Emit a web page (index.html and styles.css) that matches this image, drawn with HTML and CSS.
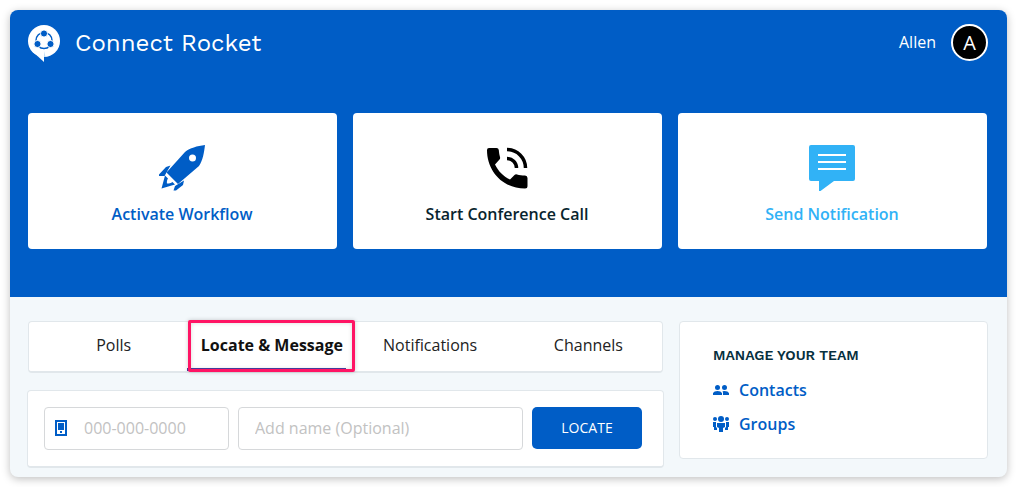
FILE: index.html
```html
<!DOCTYPE html>
<html lang="en">
<head>
<meta charset="utf-8">
<meta name="viewport" content="width=device-width, initial-scale=1">
<title>Connect Rocket</title>
<link rel="stylesheet" href="styles.css">
</head>
<body>
<div class="app">
  <header class="hero">
    <div class="topbar">
      <div class="brand">
        <svg class="brand-logo" width="32" height="38" viewBox="0 0 32 38" aria-hidden="true">
          <circle cx="16" cy="17" r="16" fill="#fff"/>
          <path d="M4 27 16 38V27z" fill="#fff"/>
          <path d="M16 27 17.500 33H16z" fill="#bcdcf7"/>
          <circle cx="16" cy="16.500" r="8" fill="none" stroke="#005dc6" stroke-width="1.500"/>
          <g fill="#005dc6" stroke="#fff"><circle cx="16" cy="9.500" r="3.600"/><circle cx="9.500" cy="20" r="3.600"/><circle cx="22.500" cy="20" r="3.600"/></g>
        </svg>
        <span class="brand-name">Connect Rocket</span>
      </div>
      <div class="user">
        <span class="user-name">Allen</span>
        <span class="avatar">A</span>
      </div>
    </div>
    <div class="actions">
      <button class="action action-workflow" type="button">
        <svg width="48" height="48" viewBox="0 0 48 48" fill="currentColor" aria-hidden="true">
          <path fill-rule="evenodd" d="M47 1C39 2 32 4 27 8L8.500 28.500 20 40 41 22C45 16 46 9 47 1zM34.500 10.500a3.500 3.500 0 1 1 0 7 3.500 3.500 0 0 1 0-7z"/>
          <path d="M12.500 21.500 8 23 1 30.500V32H6.500zM26 36.500 25 41 18 46.500H15.500L17 42zM7 31.500 3.500 44.500 17 40.500 14.500 38C12 40 9 39.500 9 39.500S8.500 36.500 10 34.500z"/>
        </svg>
        <span>Activate Workflow</span>
      </button>
      <button class="action action-call" type="button">
        <svg width="48" height="48" viewBox="0 0 48 48" aria-hidden="true">
          <path fill="#000" d="M6 4H13.500Q15.500 4 15.800 6C16 9 16.500 11 17 13Q17.400 14.500 16.500 15.500L12 20.500C15.500 27.500 20 32 27 35.500L31.500 31Q32.500 30 34 30.400C36.500 31.200 39 31.500 42 31.500Q44.500 31.700 44.500 34V42Q44.500 44.500 42 44.500C20 44.500 4 27.500 4 6Q4 4 6 4z"/>
          <path d="M24 5.500A18.500 18.500 0 0 1 42.500 24M24 14.500A9.500 9.500 0 0 1 33.500 24" fill="none" stroke="#000" stroke-width="3.500"/>
        </svg>
        <span>Start Conference Call</span>
      </button>
      <button class="action action-notify" type="button">
        <svg width="48" height="48" viewBox="0 0 48 48" aria-hidden="true">
          <path fill="currentColor" d="M3 1H45Q47 1 47 3V35Q47 37 45 37H26L12.500 47H11V37H3Q1 37 1 35V3Q1 1 3 1z"/>
          <path d="M10 11H38M10 18H38M10 25H38" stroke="#fff" stroke-width="2"/>
        </svg>
        <span>Send Notification</span>
      </button>
    </div>
  </header>
  <main class="content">
    <section class="primary">
      <nav class="tabs">
        <button class="tab" type="button">Polls</button>
        <button class="tab tab-active" type="button">Locate &amp; Message</button>
        <button class="tab" type="button">Notifications</button>
        <button class="tab" type="button">Channels</button>
      </nav>
      <form class="locate">
        <label class="field field-phone">
          <svg width="12" height="16" viewBox="0 0 12 16" aria-hidden="true"><path fill="#005dc6" fill-rule="evenodd" d="M0 0H12V16H0zM2 2V14H10V2z"/><path fill="#005dc6" d="M3 3H9V10H3zM5 11H7V13H5z"/></svg>
          <input type="tel" placeholder="000-000-0000" aria-label="Phone number">
        </label>
        <label class="field field-name">
          <input type="text" placeholder="Add name (Optional)" aria-label="Name">
        </label>
        <button class="locate-button" type="button">LOCATE</button>
      </form>
    </section>
    <aside class="team">
      <h2 class="team-title">MANAGE YOUR TEAM</h2>
      <a class="team-link" href="#">
        <svg width="16" height="16" viewBox="0 0 16 16" fill="currentColor" aria-hidden="true"><circle cx="4.500" cy="5.500" r="2.500"/><circle cx="11.500" cy="5.500" r="2.500"/><path d="M0 13V11Q1 9 4.500 9T9 11V13zM10 13V11Q10 10 9.500 9.200L11.500 9Q15 9 16 11V13z"/></svg>
        Contacts
      </a>
      <a class="team-link" href="#">
        <svg width="16" height="16" viewBox="0 0 16 16" fill="currentColor" aria-hidden="true"><circle cx="8" cy="3" r="3"/><circle cx="2" cy="3" r="2"/><circle cx="14" cy="3" r="2"/><path d="M4 7H12V11L10 12V16H6V12L4 11zM0 6H3V11L4 12V14H1V11H0zM16 6H13V11L12 12V14H15V11H16z"/></svg>
        Groups
      </a>
    </aside>
  </main>
</div>
</body>
</html>
```
FILE: styles.css
```css
* { box-sizing: border-box; }
body {
  margin: 0;
  padding: 10px;
  background: #fff;
  color: #222;
  font: 16px/24px "Open Sans", "Noto Sans", sans-serif;
}
button, input { font: inherit; color: inherit; }
button { border: 0; padding: 0; cursor: pointer; }
svg { display: block; flex: none; }
.app {
  overflow: hidden;
  border-radius: 8px;
  background: #f3f8fb;
  box-shadow: 0 2px 8px rgba(0, 0, 0, .25);
}
.hero {
  padding: 14px 20px 48px 18px;
  background: #005dc6;
  color: #fff;
}
.topbar, .brand, .user { display: flex; align-items: center; }
.topbar { justify-content: space-between; margin: 0 -1px 51px 0; }
.brand { gap: 15px; }
.brand-name { font: 400 24px/32px "Work Sans", Inter, sans-serif; }
.user { gap: 15px; padding-bottom: 1px; }
.user-name { padding-bottom: 2px; }
.avatar {
  display: grid;
  place-items: center;
  width: 37px;
  height: 37px;
  border: 2px solid #fff;
  border-radius: 50%;
  background: #000;
  font-size: 20px;
}
.actions { display: grid; grid-template-columns: repeat(3, 1fr); gap: 16px; }
.action {
  display: flex;
  flex-direction: column;
  align-items: center;
  gap: 10px;
  padding: 31px 17px 23px 16px;
  border-radius: 4px;
  background: #fff;
  font-weight: 600;
}
.action-workflow { color: #005dc6; }
.action-call { color: #08242e; }
.action-notify { color: #31b2f6; }
.content {
  display: grid;
  grid-template-columns: minmax(0, 637fr) minmax(0, 309fr);
  align-items: start;
  gap: 15px;
  padding: 24px 19px 9px 17px;
}
.primary { display: grid; gap: 17px; }
.tabs, .locate, .team {
  border: 1px solid #e1e7eb;
  border-radius: 4px;
  background: #fff;
}
.tabs, .locate { border-bottom-width: 2px; }
.tabs { display: grid; grid-template-columns: repeat(4, 1fr); margin: 0 1px; }
.tab { position: relative; height: 49px; padding: 0 0 3px 11px; background: none; }
.tab-active {
  border-bottom: 3px solid #4a3fa5;
  padding-bottom: 0;
  color: #111;
  font-weight: 700;
}
.tab-active::after {
  content: "";
  position: absolute;
  inset: -2px -9px -4px 1px;
  border: 3px solid #ff1464;
  border-radius: 2px;
  box-shadow: 0 0 4px rgba(0, 0, 0, .2), inset 0 0 4px rgba(0, 0, 0, .15);
}
.locate {
  display: grid;
  grid-template-columns: 185fr 285fr 110fr;
  gap: 9px;
  padding: 16px 21px 16px 16px;
}
.field {
  display: flex;
  align-items: center;
  gap: 17px;
  height: 43px;
  border: 1px solid #d6d8da;
  border-radius: 4px;
}
.field-phone { padding: 0 10px 2px; }
.field-name { padding: 0 16px 2px; }
.field input {
  width: 100%;
  min-width: 0;
  padding: 0;
  border: 0;
  outline: 0;
  background: none;
}
.field input::placeholder { color: #c2c2c2; opacity: 1; }
.locate-button {
  height: 42px;
  border-radius: 5px;
  background: #005dc6;
  color: #fff;
  font-size: 14px;
}
.team {
  display: flex;
  flex-direction: column;
  align-items: flex-start;
  gap: 10px;
  padding: 23px 33px 22px;
}
.team-title {
  margin: 0 0 3px;
  color: #06303e;
  font: 600 14px/20px "Work Sans", Inter, sans-serif;
}
.team-link {
  display: flex;
  align-items: center;
  gap: 10px;
  color: #005dc6;
  font-weight: 600;
  text-decoration: none;
}
```
